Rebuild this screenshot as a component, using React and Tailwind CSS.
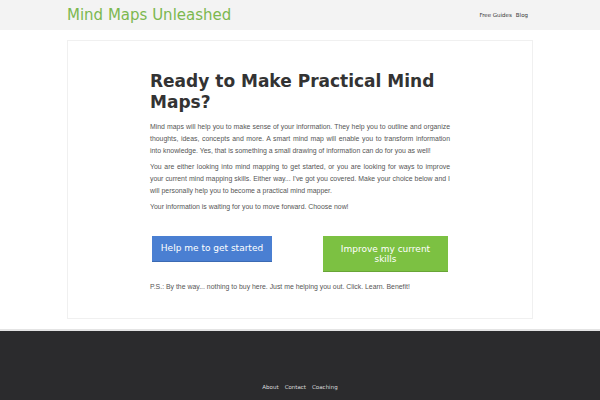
import React from 'react';

function App() {
    return (
        <div className="h-[400px] overflow-hidden bg-white flex flex-col" style={{ fontFamily: '"DejaVu Sans", sans-serif' }}>
            <header className="bg-[#f3f3f3] h-[30px] shrink-0">
                <div className="mx-auto w-[466px] h-full flex items-center justify-between">
                    <a href="#" className="text-[15px] text-[#7cb84f] leading-none mt-[1px]">Mind Maps Unleashed</a>
                    <nav className="flex gap-[4px] text-[5.5px] text-[#333] pr-[5px]">
                        <a href="#">Free Guides</a>
                        <a href="#">Blog</a>
                    </nav>
                </div>
            </header>

            <main className="pt-[10px] flex-1">
                <div className="mx-auto w-[466px] border border-[#f0f0f0] pt-[30px] pb-[25px]">
                    <div className="w-[300px] mx-auto">
                        <h1 className="font-bold text-[17px] leading-[21px] text-[#333] mb-[8px]">
                            Ready to Make Practical Mind Maps?
                        </h1>
                        <div className="text-[6.9px] leading-[12px] text-[#555] text-justify" style={{ fontFamily: '"Liberation Sans", Arial, sans-serif' }}>
                            <p className="mb-[4px]">
                                Mind maps will help you to make sense of your information. They help you to outline and organize thoughts, ideas, concepts and more. A smart mind map will enable you to transform information into knowledge. Yes, that is something a small drawing of information can do for you as well!
                            </p>
                            <p className="mb-[4px]">
                                You are either looking into mind mapping to get started, or you are looking for ways to improve your current mind mapping skills. Either way... I've got you covered. Make your choice below and I will personally help you to become a practical mind mapper.
                            </p>
                            <p>Your information is waiting for you to move forward. Choose now!</p>
                        </div>

                        <div className="flex justify-between items-start mt-[23px] mb-[9px]">
                            <a href="#" className="w-[120px] h-[26px] ml-[2px] bg-[#4a7fd2] border-b border-[#3b6ab3] text-white text-[9px] flex items-center justify-center">
                                Help me to get started
                            </a>
                            <a href="#" className="w-[125px] h-[36px] mr-[2px] bg-[#7cc142] border-b border-[#68a536] text-white text-[9px] leading-[10px] flex items-center justify-center text-center px-[12px]">
                                Improve my current skills
                            </a>
                        </div>

                        <p className="text-[6.9px] leading-[12px] text-[#555]" style={{ fontFamily: '"Liberation Sans", Arial, sans-serif' }}>
                            P.S.: By the way... nothing to buy here. Just me helping you out. Click. Learn. Benefit!
                        </p>
                    </div>
                </div>
            </main>

            <footer className="bg-[#2b2b2d] border-t-2 border-[#e4e4e4] h-[71px] shrink-0 flex items-end justify-center pb-[9px]">
                <nav className="flex gap-[6px] text-[5.5px] text-[#ddd]">
                    <a href="#">About</a>
                    <a href="#">Contact</a>
                    <a href="#">Coaching</a>
                </nav>
            </footer>
        </div>
    );
}

export default App;
